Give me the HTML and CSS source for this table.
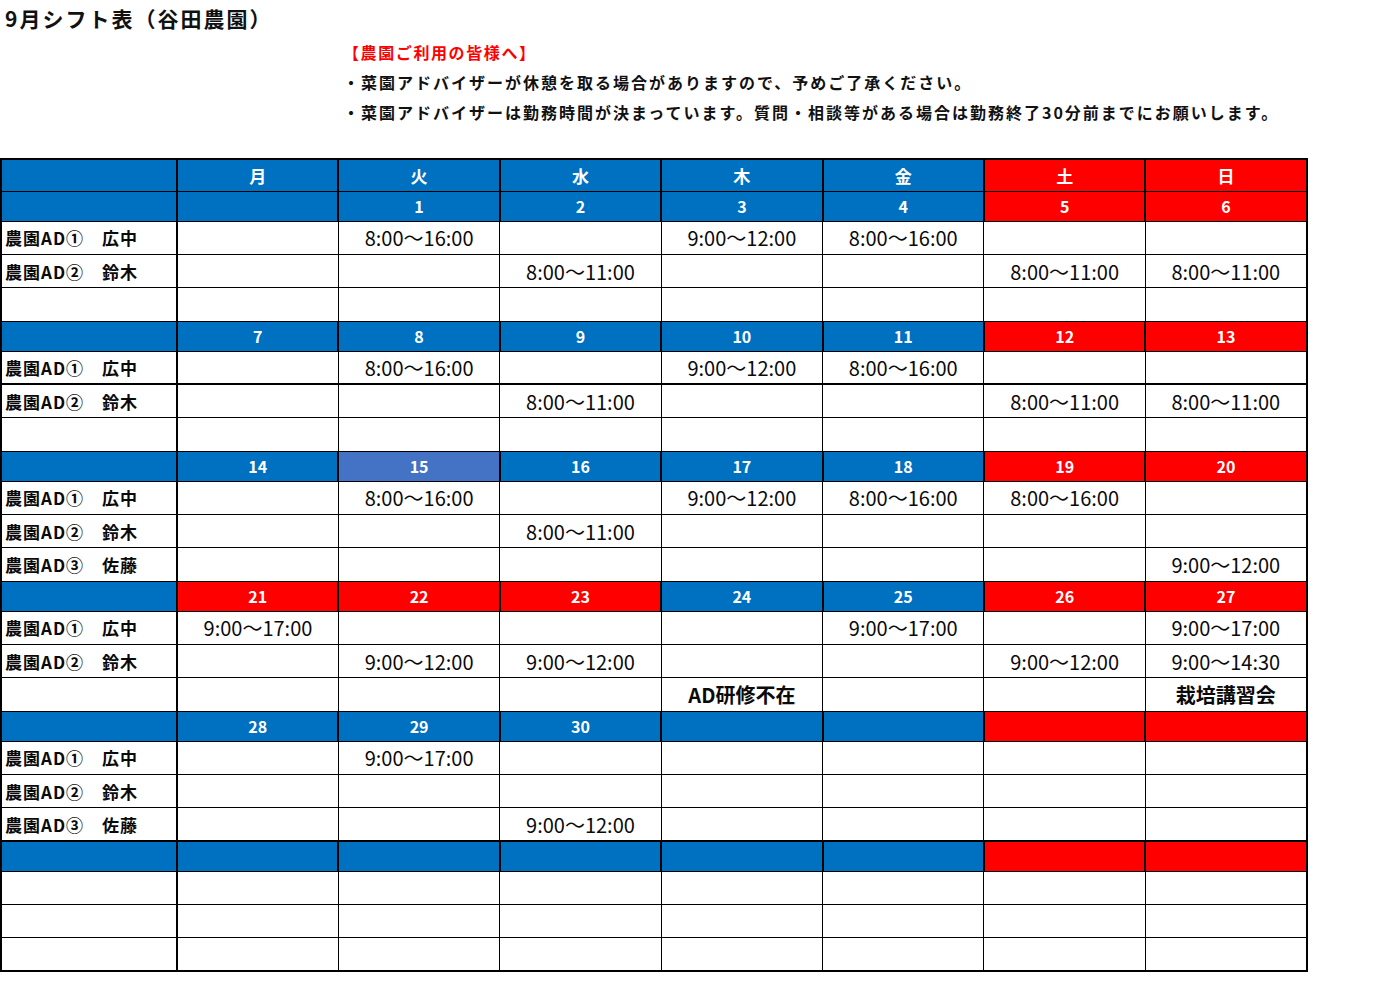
FILE: index.html
```html
<!DOCTYPE html>
<html lang="ja">
<head>
<meta charset="utf-8">
<title>9月シフト表（谷田農園）</title>
<link rel="stylesheet" href="styles.css">
</head>
<body>
<h1 class="title">9月シフト表（谷田農園）</h1>
<div class="notice">
  <p class="notice-head">【農園ご利用の皆様へ】</p>
  <p>・菜園アドバイザーが休憩を取る場合がありますので、予めご了承ください。</p>
  <p>・菜園アドバイザーは勤務時間が決まっています。質問・相談等がある場合は勤務終了30分前までにお願いします。</p>
</div>
<table class="shift">
  <colgroup>
    <col class="c-label">
    <col><col><col><col><col><col><col>
  </colgroup>
  <tr class="head">
    <td class="b"></td><td class="b">月</td><td class="b">火</td><td class="b">水</td><td class="b">木</td><td class="b">金</td><td class="r">土</td><td class="r">日</td>
  </tr>
  <!-- week 1 -->
  <tr class="date">
    <td class="b"></td><td class="b"></td><td class="b">1</td><td class="b">2</td><td class="b">3</td><td class="b">4</td><td class="r">5</td><td class="r">6</td>
  </tr>
  <tr class="data">
    <td class="lbl">農園AD①　広中</td><td></td><td>8:00～16:00</td><td></td><td>9:00～12:00</td><td>8:00～16:00</td><td></td><td></td>
  </tr>
  <tr class="data">
    <td class="lbl">農園AD②　鈴木</td><td></td><td></td><td>8:00～11:00</td><td></td><td></td><td>8:00～11:00</td><td>8:00～11:00</td>
  </tr>
  <tr class="data">
    <td class="lbl"></td><td></td><td></td><td></td><td></td><td></td><td></td><td></td>
  </tr>
  <!-- week 2 -->
  <tr class="date">
    <td class="b"></td><td class="b">7</td><td class="b">8</td><td class="b">9</td><td class="b">10</td><td class="b">11</td><td class="r">12</td><td class="r">13</td>
  </tr>
  <tr class="data">
    <td class="lbl">農園AD①　広中</td><td></td><td>8:00～16:00</td><td></td><td>9:00～12:00</td><td>8:00～16:00</td><td></td><td></td>
  </tr>
  <tr class="data thick">
    <td class="lbl">農園AD②　鈴木</td><td></td><td></td><td>8:00～11:00</td><td></td><td></td><td>8:00～11:00</td><td>8:00～11:00</td>
  </tr>
  <tr class="data">
    <td class="lbl"></td><td></td><td></td><td></td><td></td><td></td><td></td><td></td>
  </tr>
  <!-- week 3 -->
  <tr class="date">
    <td class="b"></td><td class="b">14</td><td class="hl">15</td><td class="b">16</td><td class="b">17</td><td class="b">18</td><td class="r">19</td><td class="r">20</td>
  </tr>
  <tr class="data">
    <td class="lbl">農園AD①　広中</td><td></td><td>8:00～16:00</td><td></td><td>9:00～12:00</td><td>8:00～16:00</td><td>8:00～16:00</td><td></td>
  </tr>
  <tr class="data">
    <td class="lbl">農園AD②　鈴木</td><td></td><td></td><td>8:00～11:00</td><td></td><td></td><td></td><td></td>
  </tr>
  <tr class="data">
    <td class="lbl">農園AD③　佐藤</td><td></td><td></td><td></td><td></td><td></td><td></td><td>9:00～12:00</td>
  </tr>
  <!-- week 4 -->
  <tr class="date">
    <td class="b"></td><td class="r">21</td><td class="r">22</td><td class="r">23</td><td class="b">24</td><td class="b">25</td><td class="r">26</td><td class="r">27</td>
  </tr>
  <tr class="data">
    <td class="lbl">農園AD①　広中</td><td>9:00～17:00</td><td></td><td></td><td></td><td>9:00～17:00</td><td></td><td>9:00～17:00</td>
  </tr>
  <tr class="data">
    <td class="lbl">農園AD②　鈴木</td><td></td><td>9:00～12:00</td><td>9:00～12:00</td><td></td><td></td><td>9:00～12:00</td><td>9:00～14:30</td>
  </tr>
  <tr class="data">
    <td class="lbl"></td><td></td><td></td><td></td><td class="note">AD研修不在</td><td></td><td></td><td class="note">栽培講習会</td>
  </tr>
  <!-- week 5 -->
  <tr class="date">
    <td class="b"></td><td class="b">28</td><td class="b">29</td><td class="b">30</td><td class="b"></td><td class="b"></td><td class="r"></td><td class="r"></td>
  </tr>
  <tr class="data">
    <td class="lbl">農園AD①　広中</td><td></td><td>9:00～17:00</td><td></td><td></td><td></td><td></td><td></td>
  </tr>
  <tr class="data">
    <td class="lbl">農園AD②　鈴木</td><td></td><td></td><td></td><td></td><td></td><td></td><td></td>
  </tr>
  <tr class="data">
    <td class="lbl">農園AD③　佐藤</td><td></td><td></td><td>9:00～12:00</td><td></td><td></td><td></td><td></td>
  </tr>
  <!-- week 6 -->
  <tr class="date thick">
    <td class="b"></td><td class="b"></td><td class="b"></td><td class="b"></td><td class="b"></td><td class="b"></td><td class="r"></td><td class="r"></td>
  </tr>
  <tr class="data">
    <td class="lbl"></td><td></td><td></td><td></td><td></td><td></td><td></td><td></td>
  </tr>
  <tr class="data">
    <td class="lbl"></td><td></td><td></td><td></td><td></td><td></td><td></td><td></td>
  </tr>
  <tr class="data">
    <td class="lbl"></td><td></td><td></td><td></td><td></td><td></td><td></td><td></td>
  </tr>
</table>
</body>
</html>
```

FILE: styles.css
```css
html, body {
  margin: 0;
  padding: 0;
  background: #ffffff;
}

body {
  font-family: "Noto Sans CJK JP", "Noto Sans", sans-serif;
  color: #111111;
}

.title {
  margin: 0;
  padding-left: 5px;
  height: 37px;
  line-height: 37px;
  font-size: 21px;
  font-weight: 700;
  letter-spacing: 2px;
}

.notice {
  margin-left: 343px;
  font-size: 16px;
  font-weight: 700;
  letter-spacing: 2px;
}

.notice p {
  margin: 0;
  height: 30px;
  line-height: 30px;
  white-space: nowrap;
}

.notice .notice-head {
  color: #ff0000;
  letter-spacing: 1.6px;
}

.shift {
  margin-top: 31px;
  width: 1306px;
  table-layout: fixed;
  border-collapse: collapse;
  border: 2px solid #000;
}

.shift col {
  width: 161.4px;
}

.shift col.c-label {
  width: 176px;
}

.shift td {
  border: 1px solid #000;
  padding: 0;
  text-align: center;
  vertical-align: middle;
  white-space: nowrap;
  overflow: hidden;
  font-size: 20px;
  font-weight: 400;
  color: #0a0a0a;
}

.shift td:first-child {
  border-right: 2px solid #000;
}

.shift tr.head {
  height: 32px;
}

.shift tr.date {
  height: 30px;
}

.shift tr.data {
  height: 33.35px;
}

.shift tr.thick td {
  border-top: 2px solid #000;
}

.shift td.b,
.shift td.r,
.shift td.hl {
  color: #ffffff;
  font-weight: 700;
  font-size: 16px;
  border-left: 2px solid #000;
  border-right: 2px solid #000;
}

.shift tr.head td {
  font-size: 17px;
}

.shift td.b {
  background: #0070c0;
}

.shift td.r {
  background: #ff0000;
}

.shift td.hl {
  background: #4472c4;
}

.shift td.lbl {
  text-align: left;
  padding-left: 3px;
  font-size: 17px;
  font-weight: 700;
  letter-spacing: 1px;
}

.shift td.note {
  font-weight: 700;
  font-size: 20px;
}
```
